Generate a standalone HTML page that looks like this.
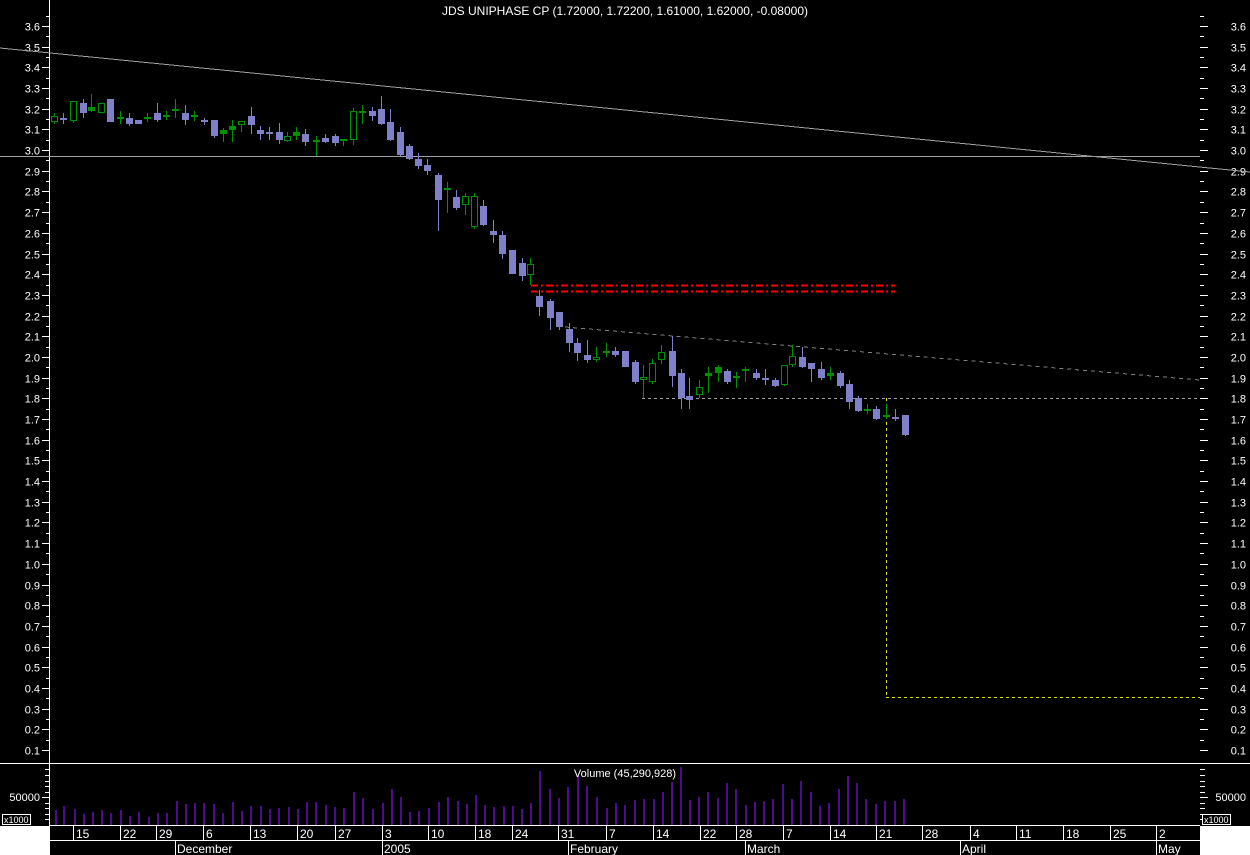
<!DOCTYPE html>
<html><head><meta charset="utf-8"><style>
html,body{margin:0;padding:0;background:#000;width:1250px;height:855px;overflow:hidden}
svg{display:block;font-family:"Liberation Sans",Arial,sans-serif}
</style></head><body>
<svg id="s" width="1250" height="855" viewBox="0 0 1250 855" shape-rendering="crispEdges"></svg>
<script>
var s=document.getElementById('s'),h='';
function L(x1,y1,x2,y2,c,w,d){h+='<line x1="'+x1+'" y1="'+y1+'" x2="'+x2+'" y2="'+y2+'" stroke="'+c+'" stroke-width="'+(w||1)+'"'+(d?' stroke-dasharray="'+d+'"':'')+'/>';}
function R(x,y,w,hh,f,st){h+='<rect x="'+x+'" y="'+y+'" width="'+w+'" height="'+hh+'" fill="'+f+'"'+(st?' stroke="'+st+'"':'')+'/>';}
function T(x,y,t,a,sz){h+='<text x="'+x+'" y="'+y+'" fill="#fff" font-size="'+(sz||11)+'" text-anchor="'+(a||'start')+'">'+t+'</text>';}
R(0,0,1250,855,'#000');
// price scale
for(var i=0;i<=71;i++){var p=3.65-i*0.05;var y=Math.round(26+(3.6-p)*206.86)+0.5;if(y>760)continue;var maj=(i%2==1);
L(maj?42:46,y,49,y,'#fff');L(1200,y,maj?1208:1204,y,'#fff');
if(maj){var lb=p.toFixed(1);T(40,y+4,lb,'end');T(1246,y+4,lb,'end');}}
L(49.5,0,49.5,825,'#fff');
// lines
L(0,48,1250,172,'#a0a0a0');
L(0,156.5,1200,156.5,'#a0a0a0');
L(531,285.5,895,285.5,'#ff0000',2,'7 3 2 3');
L(531,291.5,895,291.5,'#ff0000',2,'7 3 2 3');
L(565,327,1200,380,'#808080',1,'4 4');
L(642,398.5,1200,398.5,'#a0a0a0',1,'3 3');
L(886.5,398,886.5,697,'#e0e000',1,'3 3');
L(886,697.5,1200,697.5,'#e0e000',1,'3 3');
// candles: x, bodyTop, bodyBot, wickTop, wickBot, type
var C=[[54,116,122,113,124,'g'],[63,118,120,113,124,'b'],[73,101,121,101,123,'g'],[83,103,113,99,118,'b'],[91,107,111,94,112,'G'],[101,103,113,103,113,'g'],[110,99,122,99,122,'b'],[120,117,119,111,124,'g'],[129,118,124,113,126,'b'],[138,120,124,120,124,'b'],[147,117,119,113,122,'g'],[157,113,120,103,122,'b'],[166,115,117,111,120,'g'],[175,109,111,99,118,'G'],[185,113,120,105,125,'b'],[194,115,116,111,121,'G'],[204,120,122,118,125,'b'],[214,120,136,120,138,'b'],[223,130,134,128,142,'G'],[232,126,130,120,142,'G'],[241,121,125,121,132,'g'],[251,116,125,107,134,'b'],[260,130,134,126,140,'b'],[269,132,133,127,140,'b'],[279,132,140,123,144,'b'],[287,136,141,132,142,'g'],[296,132,136,127,140,'G'],[305,134,142,129,146,'b'],[316,140,142,136,156,'g'],[325,138,142,134,143,'b'],[335,136,143,134,146,'b'],[343,139,141,139,146,'G'],[353,111,140,108,145,'g'],[362,111,113,105,124,'g'],[372,111,116,107,121,'b'],[381,109,124,96,125,'b'],[390,122,140,109,141,'b'],[400,132,155,127,156,'b'],[409,146,159,144,160,'b'],[418,159,166,153,169,'b'],[427,165,171,159,175,'b'],[438,175,200,173,231,'b'],[447,188,190,182,213,'G'],[456,197,208,190,210,'b'],[465,196,205,193,215,'g'],[474,196,227,193,229,'g'],[483,206,225,200,226,'b'],[493,231,235,220,243,'b'],[502,235,254,231,259,'b'],[512,250,274,250,274,'b'],[522,263,276,258,281,'b'],[530,264,275,258,285,'g'],[539,296,307,290,316,'b'],[550,301,318,299,330,'b'],[559,312,327,312,330,'b'],[569,329,343,323,352,'b'],[577,343,353,338,361,'b'],[587,355,360,340,363,'b'],[596,357,360,347,362,'g'],[606,351,353,343,357,'G'],[615,351,355,347,357,'b'],[625,351,367,351,367,'b'],[635,362,382,360,384,'b'],[643,377,380,365,398,'g'],[652,363,382,359,384,'g'],[661,352,360,345,364,'g'],[672,351,376,336,387,'b'],[681,373,398,369,409,'b'],[689,396,400,378,409,'b'],[699,387,395,380,398,'g'],[708,373,376,367,393,'G'],[718,367,373,365,382,'G'],[727,371,382,369,384,'b'],[736,376,378,372,388,'g'],[745,369,371,367,382,'g'],[756,373,378,369,380,'b'],[765,378,380,369,385,'b'],[775,380,386,378,387,'b'],[784,365,385,365,386,'g'],[792,356,365,345,367,'g'],[802,357,367,347,368,'b'],[811,363,369,363,382,'b'],[821,369,378,362,380,'b'],[830,373,376,367,380,'G'],[840,373,386,371,388,'b'],[849,384,402,380,409,'b'],[858,398,411,396,412,'b'],[867,409,411,404,414,'g'],[876,409,419,406,420,'b'],[886,415,417,404,419,'G'],[895,417,419,409,421,'b'],[905,415,435,415,436,'b']];
C.forEach(function(c){var x=c[0],col=c[5]=='b'?'#8080c8':'#009000';
L(x+0.5,c[3],x+0.5,c[4],col);
if(c[5]=='g'){R(x-2.5,c[1]+0.5,6,Math.max(c[2]-c[1]-1,1),'#000',col);}
else R(x-3,c[1],7,Math.max(c[2]-c[1],2),col);});
// title
T(625,15,'JDS UNIPHASE CP (1.72000, 1.72200, 1.61000, 1.62000, -0.08000)','middle',12);
// volume panel
L(0,763.5,1250,763.5,'#fff');
var V=[[55,810],[63,806],[74,809],[83,814],[92,812],[101,810],[110,813],[120,810],[129,816],[138,812],[148,817],[157,813],[166,813],[176,801],[185,804],[194,803],[203,803],[213,804],[222,813],[232,802],[241,811],[250,806],[260,806],[269,809],[278,808],[288,807],[297,809],[306,802],[315,802],[325,805],[334,807],[343,808],[353,792],[362,798],[372,809],[382,803],[391,789],[400,797],[409,812],[418,811],[428,808],[438,802],[447,797],[457,801],[466,804],[475,795],[484,805],[493,807],[503,806],[512,806],[521,809],[530,803],[539,771],[549,789],[558,798],[567,787],[577,776],[586,786],[596,797],[606,808],[615,803],[624,805],[634,800],[643,799],[653,799],[662,792],[671,782],[680,767],[689,800],[698,797],[707,792],[717,798],[726,783],[735,789],[745,805],[754,802],[763,801],[772,799],[782,784],[791,799],[800,781],[810,792],[819,806],[828,803],[838,789],[847,776],[856,783],[865,799],[875,804],[884,801],[894,801],[903,799]];
V.forEach(function(v){R(v[0],v[1],2,825-v[1],'#4c0c8c');});
T(625,777,'Volume (45,290,928)','middle',11);
[769,775,781,786,792,797,803,808,814,819].forEach(function(y,i){var mj=(y==797);L(mj?42:45,y+0.5,49,y+0.5,'#fff');L(1200,y+0.5,mj?1208:1205,y+0.5,'#fff');});
T(40,801,'50000','end');T(1246,801,'50000','end');
R(2.5,814.5,28,10,'#000','#fff');h+='<text x="4" y="823" fill="#fff" font-size="9">x1000</text>';
R(1202.5,814.5,28,10,'#000','#fff');h+='<text x="1204" y="823" fill="#fff" font-size="9">x1000</text>';
// bottom
R(0,826,50,29,'#fff');R(1200,826,50,29,'#fff');
L(49,825.5,1200,825.5,'#fff');L(49,840.5,1200,840.5,'#fff');
[[73,'15'],[120,'22'],[156,'29'],[203,'6'],[250,'13'],[297,'20'],[335,'27'],[382,'3'],[428,'10'],[475,'18'],[512,'24'],[558,'31'],[606,'7'],[653,'14'],[700,'22'],[736,'28'],[783,'7'],[830,'14'],[876,'21'],[922,'28'],[970,'4'],[1016,'11'],[1063,'18'],[1110,'25'],[1156,'2']].forEach(function(d){L(d[0]+0.5,826,d[0]+0.5,840,'#fff');T(d[0]+3,838,d[1],'start',12);});
[[175,'December'],[382,'2005'],[568,'February'],[745,'March'],[960,'April'],[1156,'May']].forEach(function(d){L(d[0]+0.5,841,d[0]+0.5,855,'#fff');T(d[0]+2,853,d[1],'start',12);});
s.innerHTML=h;
</script>
</body></html>
